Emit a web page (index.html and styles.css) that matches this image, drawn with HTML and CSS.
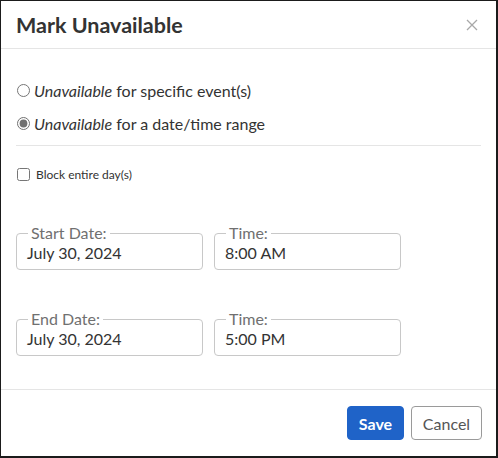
FILE: index.html
```html
<!DOCTYPE html>
<html>
<head>
<meta charset="utf-8">
<link rel="stylesheet" href="styles.css">
</head>
<body>
<div class="dialog">
  <div class="header">
    <h1 class="title">Mark Unavailable</h1>
    <svg class="close" width="12" height="12" viewBox="0 0 12 12"><path d="M1 1 L11 11 M11 1 L1 11" stroke="#a8a8a8" stroke-width="1.3" fill="none"/></svg>
  </div>
  <div class="body">
    <label class="radio-row"><input type="radio" name="mode"> <span><em>Unavailable</em> for specific event(s)</span></label>
    <label class="radio-row"><input type="radio" name="mode" checked> <span><em>Unavailable</em> for a date/time range</span></label>
    <div class="divider"></div>
    <label class="check-row"><input type="checkbox"> <span>Block entire day(s)</span></label>
    <div class="field-row first">
      <fieldset class="field"><legend>Start Date:</legend><span class="value">July 30, 2024</span></fieldset>
      <fieldset class="field"><legend>Time:</legend><span class="value">8:00 AM</span></fieldset>
    </div>
    <div class="field-row">
      <fieldset class="field"><legend>End Date:</legend><span class="value">July 30, 2024</span></fieldset>
      <fieldset class="field"><legend>Time:</legend><span class="value">5:00 PM</span></fieldset>
    </div>
  </div>
  <div class="footer">
    <button class="btn btn-primary">Save</button>
    <button class="btn btn-secondary">Cancel</button>
  </div>
</div>
</body>
</html>
```

FILE: styles.css
```css
html, body {
  margin: 0;
  padding: 0;
  background: #fff;
}
body {
  font-family: "Lato", "Noto Sans", sans-serif;
  color: #333;
}
.dialog {
  width: 498px;
  height: 458px;
  box-sizing: border-box;
  border: 1px solid #1b1b1b;
  border-right-width: 2px;
  border-bottom-width: 2px;
  display: flex;
  flex-direction: column;
}
.header {
  height: 47px;
  flex: none;
  border-bottom: 1px solid #e5e5e5;
  display: flex;
  align-items: center;
  justify-content: space-between;
  padding: 0 18px 0 15px;
}
.title {
  margin: 0;
  font-size: 21.5px;
  font-weight: 700;
  color: #333;
}
.close {
  display: block;
  margin-top: 1px;
}
.body {
  flex: 1;
  padding: 25px 15px 0 15px;
}
.radio-row {
  display: flex;
  align-items: center;
  gap: 4px;
  font-size: 16px;
  height: 33px;
  color: #333;
}
.radio-row input {
  margin: 0 0 0 1px;
  width: 13px;
  height: 13px;
  accent-color: #707070;
}
.divider {
  height: 1px;
  background: #e5e5e5;
  margin: 5px 0 0 0;
}
.check-row {
  display: flex;
  align-items: center;
  gap: 6px;
  font-size: 12px;
  margin-top: 21px;
  color: #333;
}
.check-row input {
  margin: 0 0 0 1px;
  width: 13px;
  height: 13px;
}
.field-row {
  display: flex;
  gap: 11px;
  margin-top: 42px;
}
.field-row.first {
  margin-top: 44px;
}
.field {
  margin: 0;
  width: 187px;
  box-sizing: border-box;
  border: 1px solid #c8c8c8;
  border-radius: 4px;
  padding: 0 10px 5px 10px;
  height: 44px;
}
.field legend {
  font-size: 16px;
  color: #707070;
  padding: 0 3px;
  margin-left: 1px;
  line-height: 14px;
}
.value {
  font-size: 16px;
  color: #333;
  display: block;
  line-height: 20px;
  margin-top: 3px;
}
.footer {
  height: 67px;
  flex: none;
  box-sizing: border-box;
  border-top: 1px solid #e5e5e5;
  display: flex;
  justify-content: flex-end;
  align-items: center;
  gap: 7px;
  padding: 0 14px 0 0;
}
.btn {
  font-family: inherit;
  font-size: 16px;
  height: 34px;
  border-radius: 4px;
  padding: 0;
  cursor: pointer;
}
.btn-primary {
  background: #1f63c8;
  border: 1px solid #1f63c8;
  color: #fff;
  font-weight: 700;
  width: 57px;
}
.btn-secondary {
  background: #fff;
  border: 1px solid #9a9a9a;
  color: #555;
  width: 71px;
}
```
